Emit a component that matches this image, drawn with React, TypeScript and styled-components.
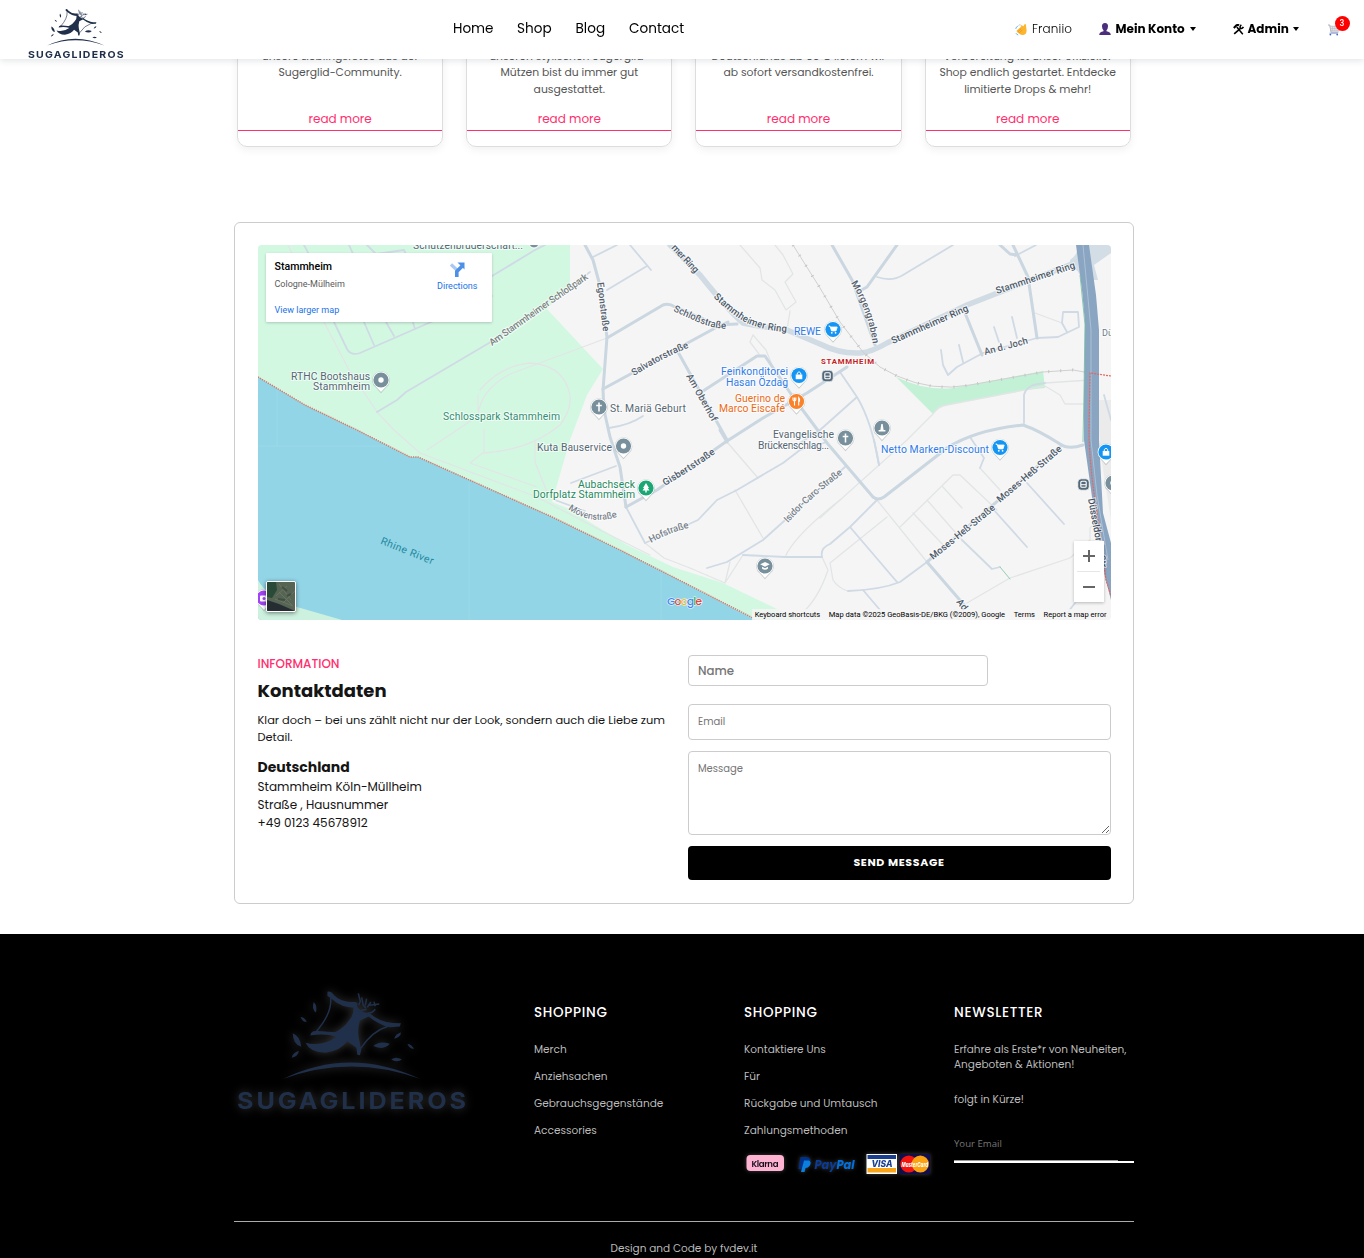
import React from "react";
import styled, { createGlobalStyle } from "styled-components";

const PINK = "#ff2f6e";
const NAVY = "#20304a";

const GlobalStyle = createGlobalStyle`
  *, *::before, *::after { box-sizing: border-box; }
  html, body { margin: 0; padding: 0; overflow: hidden; }
  body {
    background: #fff;
    color: #151515;
    font-family: Poppins, Inter, "Open Sans", sans-serif;
    font-size: 12px;
  }
  h2, h3, h4, p, ul { margin: 0; padding: 0; font-weight: inherit; list-style: none; }
  a { color: inherit; text-decoration: none; }
`;

/* ---------- header ---------- */

const Header = styled.header`
  position: fixed;
  inset: 0 0 auto 0;
  z-index: 10;
  height: 59px;
  display: flex;
  align-items: center;
  background: #fff;
  box-shadow: 0 2px 6px rgba(32, 48, 74, 0.12);
`;

const HeaderLogo = styled.div`
  width: 425px;
  height: 59px;
  padding: 8px 0 0 28px;
`;

const Nav = styled.nav`
  display: flex;
  flex: 1;
  padding-left: 28px;
  font-size: 13.6px;
  line-height: 20px;
  color: #000;
  margin-top: -1px;
`;

const NavLink = styled.a<{ $w: number }>`
  width: ${(p) => p.$w}px;
  white-space: nowrap;
`;

const Account = styled.div`
  display: flex;
  align-items: center;
  width: 349px;
  height: 20px;
  margin-top: -1px;
  color: #000;
`;

const AccountItem = styled.div<{ $w: number; $bold?: boolean; $gap?: number }>`
  display: flex;
  align-items: center;
  gap: ${(p) => p.$gap ?? 4}px;
  width: ${(p) => p.$w}px;
  font-size: 12px;
  font-weight: ${(p) => (p.$bold ? 700 : 300)};
  letter-spacing: ${(p) => (p.$bold ? 0 : 0.15)}px;
  white-space: nowrap;
`;

const Caret = styled.span`
  border: 3px solid transparent;
  border-top: 4px solid #000;
  border-bottom: 0;
  margin-left: 1px;
`;

const Cart = styled.div`
  position: relative;
  width: 24px;
  height: 20px;
  padding-top: 4px;
`;

const Badge = styled.span`
  position: absolute;
  left: 6.5px;
  top: -3px;
  width: 15px;
  height: 15px;
  border-radius: 50%;
  background: #f00;
  color: #fff;
  font-size: 8px;
  line-height: 15px;
  font-weight: 500;
  text-align: center;
`;

/* ---------- teaser cards ---------- */

const Cards = styled.section`
  display: grid;
  grid-template-columns: repeat(4, 206.3px);
  column-gap: 22.9px;
  margin-left: 237px;
`;

const Card = styled.article`
  display: flex;
  flex-direction: column;
  height: 147px;
  padding: 47px 0 16px;
  border: 1px solid #ddd;
  border-radius: 10px;
  box-shadow: 0 3px 8px rgba(0, 0, 0, 0.06);
  text-align: center;
`;

const CardText = styled.p`
  flex: none;
  height: 61px;
  font-size: 10.8px;
  line-height: 17px;
  color: #555;
  white-space: nowrap;
`;

const CardLine = styled.span`
  display: block;
  &:first-child { height: 16px; }
`;

const CardLink = styled.a`
  flex: none;
  height: 22px;
  border-bottom: 1px solid ${PINK};
  && { color: ${PINK}; }
  font-size: 12px;
  line-height: 20px;
`;

/* ---------- contact ---------- */

const Contact = styled.section`
  width: 900px;
  height: 682px;
  margin: 75px 0 30px 234px;
  padding: 22px 22px 0 23px;
  border: 1px solid #ccc;
  border-radius: 6px;
`;

const MapBox = styled.div`
  position: relative;
  width: 853px;
  height: 375px;
  border-radius: 4px;
  overflow: hidden;
  font-family: Roboto, sans-serif;
  > svg { display: block; }
`;

const PlaceCard = styled.div`
  position: absolute;
  left: 8px;
  top: 8px;
  width: 226px;
  height: 69px;
  display: flex;
  justify-content: space-between;
  padding: 6px 14.5px 0 8.5px;
  background: #fff;
  border-radius: 1px;
  box-shadow: 0 1px 3px rgba(0, 0, 0, 0.2);
`;

const PlaceName = styled.div`
  font-size: 10.6px;
  font-weight: 500;
  line-height: 15px;
  color: #000;
`;

const PlaceRegion = styled.div`
  margin-top: 4px;
  font-size: 9px;
  line-height: 12px;
  color: #5b5b5b;
`;

const BlueLink = styled.a<{ $mt: number }>`
  display: block;
  margin-top: ${(p) => p.$mt}px;
  font-size: 9px;
  line-height: 12px;
  && { color: #1a73e8; }
`;

const Directions = styled.div`
  display: flex;
  flex-direction: column;
  align-items: center;
  padding-top: 3px;
`;

const ZoomControl = styled.div`
  position: absolute;
  right: 7px;
  top: 296px;
  width: 30px;
  height: 61px;
  background: #fff;
  box-shadow: 0 1px 3px rgba(0, 0, 0, 0.25);
`;

const Satellite = styled.div`
  position: absolute;
  left: 8px;
  top: 336px;
  width: 30px;
  height: 31px;
  border: 1px solid #fff;
  border-radius: 2px;
  box-shadow: 0 1px 4px rgba(0, 0, 0, 0.5);
  overflow: hidden;
`;

const Attribution = styled.div`
  position: absolute;
  right: 0;
  bottom: 0;
  display: flex;
  gap: 8.6px;
  height: 11px;
  padding: 0 4.5px 0 3px;
  background: rgba(245, 245, 245, 0.85);
  font-size: 7.55px;
  line-height: 11px;
  color: #000;
  white-space: nowrap;
`;

const Columns = styled.div`
  display: grid;
  grid-template-columns: 430px 423px;
  padding-top: 35px;
`;

const Details = styled.div`
  display: flex;
  flex-direction: column;
  white-space: nowrap;
  margin-left: -0.5px;
`;

const Eyebrow = styled.div`
  color: ${PINK};
  font-size: 12px;
  font-weight: 500;
  line-height: 18px;
`;

const Title = styled.h2`
  font-size: 18px;
  font-weight: 700;
  line-height: 24px;
  margin-top: 6px;
`;

const Intro = styled.p`
  margin-top: 9px;
  font-size: 11.4px;
  line-height: 17px;
`;

const Country = styled.h3`
  margin-top: 10px;
  font-size: 14px;
  font-weight: 700;
  line-height: 22px;
`;

const AddressLine = styled.p`
  font-size: 12px;
  line-height: 18px;
`;

const Form = styled.form`
  display: flex;
  flex-direction: column;
  align-items: stretch;
`;

const Input = styled.input<{ $w: number; $h: number; $size: number; $mb: number; $weight?: number; $pt?: number }>`
  width: ${(p) => p.$w}px;
  height: ${(p) => p.$h}px;
  margin: 0 0 ${(p) => p.$mb}px;
  padding: ${(p) => p.$pt ?? 0}px 9px 0;
  border: 1px solid #ccc;
  border-radius: 4px;
  font-family: inherit;
  font-size: ${(p) => p.$size}px;
  font-weight: ${(p) => p.$weight ?? 400};
  outline: 0;
  &::placeholder { color: #757575; }
`;

const TextArea = styled.textarea`
  width: 423px;
  height: 84px;
  margin: 0 0 11px;
  padding: 9px;
  border: 1px solid #ccc;
  border-radius: 4px;
  font-family: inherit;
  font-size: 10px;
  line-height: 16px;
  resize: vertical;
  &::placeholder { color: #757575; }
`;

const Send = styled.button`
  height: 34px;
  padding: 0 1px 1px 0;
  border: 0;
  border-radius: 4px;
  background: #000;
  color: #fff;
  font-family: inherit;
  font-size: 11px;
  font-weight: 700;
  letter-spacing: 0.65px;
`;

/* ---------- footer ---------- */

const Footer = styled.footer`
  height: 324px;
  background: #000;
  color: #bbb;
`;

const FooterInner = styled.div`
  width: 900px;
  margin-left: 234px;
`;

const FooterGrid = styled.div`
  display: grid;
  grid-template-columns: 300px 210px 210px 180px;
  height: 288px;
  padding-top: 55px;
  border-bottom: 1px solid #aaa;
  white-space: nowrap;
`;

const FooterLogo = styled.div`
  padding-left: 3px;
  filter: drop-shadow(0 0 5px rgba(255, 255, 255, 0.22));
`;

const FooterCol = styled.div`
  padding-top: 13px;
`;

const FooterTitle = styled.h4`
  color: #fff;
  font-size: 13.5px;
  font-weight: 500;
  line-height: 22px;
  letter-spacing: 0.7px;
  margin-bottom: 12px;
`;

const FooterLink = styled.li`
  font-size: 10.55px;
  line-height: 27px;
`;

const FooterText = styled.p<{ $mt: number }>`
  margin-top: ${(p) => p.$mt}px;
  font-size: 10.5px;
  line-height: 15px;
`;

const Payments = styled.div`
  display: flex;
  margin-top: 7px;
  filter: drop-shadow(0 0 2px rgba(255, 255, 255, 0.25));
`;

const Subscribe = styled.div`
  width: 180px;
  margin-top: 28px;
  border-bottom: 2px solid #fff;
`;

const SubscribeInput = styled.input`
  display: block;
  width: 164px;
  height: 26px;
  padding: 0 0 8px;
  border: 0;
  border-bottom: 1px solid #999;
  background: transparent;
  font-family: "Open Sans", sans-serif;
  font-size: 9.6px;
  color: #fff;
  &::placeholder { color: #777; }
`;

const Credit = styled.div`
  padding-top: 18px;
  font-size: 10.5px;
  line-height: 18px;
  text-align: center;
`;

/* ---------- drawings ---------- */

const Leaf = ({ x, y, r, s = 1 }: { x: number; y: number; r: number; s?: number }) => (
  <path
    d="M-20 0Q-5-13 20-3Q6 13-20 0Z"
    transform={`translate(${x} ${y}) rotate(${r}) scale(${s})`}
  />
);

const Logo = ({ width }: { width: number }) => (
  <svg width={width} height={(width * 370) / 692} viewBox="52 55 692 370" fill={NAVY}>
    <path d="M404 96Q420 124 456 134Q440 142 422 150Q414 175 418 200L426 238L422 254L414 253L411 232L384 212Q364 240 318 247Q272 247 258 217Q310 230 352 198L344 187Q374 172 390 148Q404 132 402 112Z" />
    <path d="M324 63Q336 60 344 74Q364 93 392 94L410 94V112Q366 112 338 86Q332 80 324 76ZM273 195Q272 184 286 181H298L360 186L352 199Q320 190 290 193ZM446 124Q484 156 522 157L545 158L542 168L512 170Q480 164 446 136Z" />
    <path d="M334 82Q338 130 288 186M506 167Q458 182 424 234" fill="none" stroke={NAVY} strokeWidth="4.5" />
    <path d="M412 96Q408 122 430 128Q456 132 468 116M417 68L423 92L418 104M427 80L432 104L440 112M442 84L438 104M455 94L444 110M480 100L450 104M464 93L468 107M424 120L442 116" fill="none" stroke={NAVY} strokeWidth="4.5" />
    <path d="M190 326Q390 226 604 326Q395 250 190 326Z" />
    <Leaf x={285} y={110} r={82} s={0.8} />
    <Leaf x={252} y={147} r={42} s={0.6} />
    <Leaf x={231} y={209} r={62} s={1.2} />
    <Leaf x={228} y={252} r={-40} s={0.75} />
    <Leaf x={487} y={225} r={-3} s={1.25} />
    <Leaf x={536} y={196} r={-40} s={0.7} />
    <Leaf x={574} y={228} r={40} s={0.6} />
    <Leaf x={532} y={268} r={4} s={0.8} />
    <text x="52" y="417" textLength="698" lengthAdjust="spacingAndGlyphs" letterSpacing="8" fontFamily="Inter, sans-serif" fontWeight="700" fontSize="68">SUGAGLIDEROS</text>
  </svg>
);

const WaveIcon = () => (
  <svg width="13" height="13" viewBox="0 0 13 13">
    <path d="M1.8 7.6L6.4 3.6L5.3 3Q5.4 2 6.6 2.3L8.4 3.2L9.6 1.2Q11 .8 11 2.4L11.6 7.5Q11.5 11.5 8.2 12Q6 12.2 4.7 11L2.2 9.2Q1.2 8.4 1.8 7.6Z" fill="#fbb52e" />
    <path d="M3 8.6L6.2 5.6M4.3 9.9L7.4 6.8" stroke="#e48a1b" strokeWidth=".7" />
    <path d="M.8 5.8Q1 3.8 2.8 3.2M3.8 2.6L5 1.4M1 10.2Q1.6 11.6 3.2 12" stroke="#62a8d8" strokeWidth=".9" fill="none" />
  </svg>
);

const PersonIcon = () => (
  <svg width="12" height="12" viewBox="0 0 12 12" fill="#4c2f7c">
    <path d="M6 0Q9.2 0 9 3.5Q8.8 6.3 7.5 7.2V8.2Q11.6 8.8 11.8 12H.2Q.4 8.8 4.5 8.2V7.2Q3.2 6.3 3 3.5Q2.8 0 6 0Z" />
  </svg>
);

const ToolsIcon = () => (
  <svg width="11" height="11" viewBox="0 0 11 11" fill="none" stroke="#000">
    <path d="M.8 4L3.6 1.2Q5 .6 6 1.4" strokeWidth="2" />
    <path d="M3.8 3L9.8 10.2" strokeWidth="1.5" />
    <path d="M1.2 9.8L7.2 4.6" strokeWidth="1.7" />
    <path d="M8.3 .8Q6.4 2.6 7.4 4.2Q9.2 5 10.4 3" strokeWidth="1.5" />
  </svg>
);

const CartIcon = () => (
  <svg width="12" height="12" viewBox="0 0 12 12" fill="none">
    <path d="M0 1H1.8L3 8.2H10.4" stroke="#a3a6b2" strokeWidth=".9" />
    <path d="M2.1 2.2H11V7H3Z" fill="#e4e4e8" stroke="#b4b6bf" strokeWidth=".7" />
    <path d="M4.6 2V7M6.8 2V7M9 2V7M2.4 4.5H11" stroke="#b4b6bf" strokeWidth=".5" />
    <path d="M1.5 9.2H10" stroke="#7f97dd" strokeWidth=".9" />
    <circle cx="2.4" cy="10.6" r=".9" fill="#4666c2" />
    <circle cx="9.2" cy="10.6" r=".9" fill="#4666c2" />
  </svg>
);

const glyphs: Record<string, React.ReactNode> = {
  dot: <circle r="2.7" fill="#fff" />,
  cross: <path d="M0-4.5V4.5M-2.8-1.5H2.8" stroke="#fff" strokeWidth="1.5" />,
  tree: <path d="M0-5L3 0H1.8L3.5 2.5H.7V4.5H-.7V2.5H-3.5L-1.8 0H-3Z" fill="#fff" />,
  bag: <><path d="M-3.3-1H3.3V3.7H-3.3Z" fill="#fff" /><path d="M-1.7-1V-2.5Q0-5 1.7-2.5V-1" fill="none" stroke="#fff" /></>,
  cart: <><path d="M-4.4-3.5H-3L-1.5 1.4H3L4.2-2.5H-2.5" fill="#fff" stroke="#fff" strokeWidth=".8" /><circle cx="-1.2" cy="3.3" r=".9" fill="#fff" /><circle cx="2.6" cy="3.3" r=".9" fill="#fff" /></>,
  fork: <path d="M-2-4V4M-3.5-4V-1.5Q-2 .5-.7-1.5V-4M2.2 4V-4Q4 -2 2.2 1" fill="none" stroke="#fff" strokeWidth="1.1" />,
  column: <path d="M-3.4 3.5H3.4V2H1.6L.7-4H-.7L-1.6 2H-3.4Z" fill="#fff" />,
  school: <><path d="M-4.8-1.7L0-4L4.8-1.7L0 .7Z" fill="#fff" /><path d="M-3 .8V2.5Q0 5 3 2.5V.8L0 2.2Z" fill="#fff" /></>,
  camera: <><rect x="-4" y="-2.5" width="8" height="6" rx="1" fill="#fff" /><circle cy=".5" r="1.5" fill="#a142f4" /></>,
};

const Pin = ({ x, y, c = "#78909c", g }: { x: number; y: number; c?: string; g: string }) => (
  <g transform={`translate(${x} ${y})`}>
    <path d="M0 13.3L-5.4 7.3A8.9 8.9 0 1 1 5.4 7.3Z" fill="#8a969c" opacity=".45" />
    <path d="M0 12L-5.2 6.6A8.4 8.4 0 1 1 5.2 6.6Z" fill="#fff" />
    <circle r="7.6" fill={c} />
    {glyphs[g]}
  </g>
);

const Transit = ({ x, y }: { x: number; y: number }) => (
  <g transform={`translate(${x} ${y})`}>
    <rect x="-5.7" y="-5.7" width="11.4" height="11.4" rx="3.5" fill="#53697a" stroke="#fff" strokeWidth=".7" />
    <rect x="-2.7" y="-3.3" width="5.4" height="6" rx="1" fill="none" stroke="#fff" strokeWidth="1.1" />
    <path d="M-2.5 .2H2.5" stroke="#fff" />
  </g>
);

const mainRoads = [
  "M670 245L700 275Q728 310 743 323Q768 328 787 330L820 344Q840 354 860 353Q872 352 887 343L967 305L1077 262",
];
const midRoads = [
  "M585 245L593 260L599 282L607 337L603 390L604 410L610 437L620 467L626 507",
  "M607 338L663 305Q669 303 675 307L717 325L737 324",
  "M603 389L717 327L728 322",
  "M678 352L727 440M720 430L727 442",
  "M626 507L657 490L727 441L763 418L807 393L847 367",
  "M700 393L757 356L765 356L793 397L825 440L827 443L873 497Q878 501 884 497L947 448Q975 430 1023 425Q1038 430 1060 444Q1068 450 1083 445",
  "M832 245L852 280L875 345",
  "M897 245L867 287L858 292",
  "M1000 245L1010 254L1017 255M1013 245L1028 277L1037 338",
  "M963 308L982 355",
  "M927 562L965 606M927 562L1060 447",
];
const smallRoads = [
  "M593 257L617 245M607 290L647 266M630 245L651 270",
  "M626 507L645 543L687 525L698 520L717 500L737 490L783 463L800 450L827 442",
  "M707 568L727 562L763 540L783 522L845 467",
  "M848 591Q880 590 900 582L927 562",
  "M822 557Q820 548 830 544L850 527L877 500M850 527L897 582",
  "M840 372L857 397Q872 422 879 465M857 397L820 430L800 443",
  "M877 277Q892 282 903 275L953 245",
  "M941 350L943 365L948 375L957 367L983 353L1037 338L1058 337L1079 327L1078 312H1063L1062 323L1067 332M959 345L963 362M994 327L999 342M1012 317L1017 338",
  "M1024 423V395Q1025 389 1033 385L1045 383",
  "M743 555L785 557H822M863 590L880 610",
  "M1027 483L1064 524M960 475M992 508L1027 547M962 540L992 569L1000 567",
  "M571 483L616 466M609 428Q630 425 643 416M555 500L585 511",
  "M377 412L397 400L406 392L489 343L590 272",
  "M304 245L311 258M349 245L354 256M367 245L376 254L404 250L411 265M334 322L347 349Q351 356 360 353L431 322L492 296M364 322L374 345M386 322L394 336M410 313L415 329M492 276L535 250L545 245",
  "M970 437L984 458L980 468M874 440L879 465M1036 245L1015 256",
  "M1068 612L1075 603M1104 395L1111 420",
];
const paths = [
  "M288 245L324 322L349 370L377 412L394 430L420 453L537 497L600 530L650 555",
  "M427 450L478 416Q480 390 510 374L607 338M478 395V410M484 430V452L470 463L537 487M535 440V462L547 492",
  "M484 453Q530 450 560 425Q575 405 568 388Q560 365 530 363Q500 366 480 390",
  "M740 245L760 268L762 280L775 290L786 310L796 302L785 282L793 274L783 255L775 245M790 311L787 330M753 335L750 342L759 354M753 335L766 350L772 365",
  "M727 442L758 478M735 490L763 538",
  "M645 543L664 558L690 568L725 583L743 555M725 583L730 562",
  "M830 563L833 580Q838 588 848 591M887 517L830 563",
  "M820 518L907 440L933 414Q938 406 947 405L1045 386L1060 395L1065 404H1090",
  "M877 500L927 562M900 527L953 475H960L997 510M913 513L945 547M927 500L962 540M942 486L962 508M980 468L1000 490",
  "M967 603L1010 578L1070 558L1090 540V528L1098 520",
  "M785 557Q795 535 840 500M822 557L828 570Q818 600 800 615M1035 313L1062 323M1045 383L1090 380",
];

type LabelProps = { x: number; y: number; r?: number; w?: number; c?: string; s?: number; b?: number; a?: "start" | "middle" | "end"; halo?: number; children: React.ReactNode };
const Label = ({ x, y, r = 0, w, c = "#6c7a89", s = 10.4, b = 400, a = "start", halo = 0.65, children }: LabelProps) => (
  <text
    transform={`translate(${x} ${y}) rotate(${r})`}
    fill={c}
    fontSize={s}
    fontWeight={b}
    textAnchor={a}
    textLength={w}
    stroke="#fff"
    strokeWidth="2"
    strokeOpacity={halo}
    strokeLinejoin="round"
    paintOrder="stroke"
  >
    {children}
  </text>
);

const Curved = ({ id, d, w, c = "#56616e", s = 9.6, children }: { id: string; d: string; w?: number; c?: string; s?: number; children: string }) => (
  <>
    <path id={id} d={d} fill="none" />
    <text fill={c} fontSize={s} fontWeight="500" stroke="#fff" strokeWidth="2" strokeOpacity=".65" paintOrder="stroke" textLength={w}>
      <textPath href={`#${id}`}>{children}</textPath>
    </text>
  </>
);

const BLUE = "#2f7bea";
const SLATE = "#566774";

const StreetMap = () => (
  <svg width="853" height="375" viewBox="258 245 853 375" fontFamily="Roboto, sans-serif">
    <rect x="258" y="245" width="853" height="375" fill="#f5f5f5" />
    <path d="M258 245H570V285L547 309L603 369L587 395L570 440L552 502L567 508L627 545L673 567L723 583L800 620H258Z" fill="#d3f8e2" />
    <path d="M896 377Q925 391 953 388L1043 371L1045 388L1027 390L947 405Q940 406 933 414Z" fill="#c3f1d5" />
    <path d="M1098 400H1111V520L1100 450Z" fill="#ebebeb" />
    <path d="M1070 260Q1078 255 1078 245H1111V253L1094 265L1098 280H1082Q1078 268 1070 266Z" fill="#d3dde6" />
    <g fill="none" strokeLinejoin="round" strokeLinecap="round">
      {paths.map((d) => <path key={d} d={d} stroke="#e2e5e6" strokeWidth="1.3" />)}
      {smallRoads.map((d) => <path key={d} d={d} stroke="#cfdae5" strokeWidth="1.8" />)}
      {midRoads.map((d) => <path key={d} d={d} stroke="#cad6e0" strokeWidth="3" />)}
      {mainRoads.map((d) => <path key={d} d={d} stroke="#d0dbe4" strokeWidth="5.5" />)}
      <path d="M793 245L820 288L840 322L863 352L880 367L897 376Q933 392 970 385L1043 372L1073 370L1090 373" stroke="#d0d0d0" />
      <path d="M793 245L820 288L840 322L863 352L880 367L897 376Q933 392 970 385L1043 372L1073 370L1090 373" stroke="#c4c4c4" strokeWidth="3" strokeDasharray="1 11" strokeLinecap="butt" />
      <path d="M1000 567L1010 579" stroke="#94cdb2" />
    </g>
    <path d="M1076 245L1082 290L1085 323L1084 390L1084 440L1092 497L1105 577L1111 600V543L1103 513L1099 440L1099 330L1096 295L1089 245Z" fill="#8aa5c1" />
    <path d="M1083 245L1091 330L1091 440L1097 495L1108 560" fill="none" stroke="#abc0d5" />
    <path d="M1080 275L1085 325L1084 390L1083 442" fill="none" stroke="#74bfa0" strokeWidth=".8" />
    <path d="M1111 376L1090 373L1089 430Q1089 465 1098 520L1106 580L1111 596" fill="none" stroke="#e26763" strokeWidth="1.2" strokeDasharray="2 1" />
    <path d="M258 377L305 405L357 430L410 457H418L550 516L620 550L683 582L756 620H258Z" fill="#91d5e6" />
    <path d="M258 580Q266 596 297 607L342 620H258Z" fill="#cdf1df" />
    <path d="M258 446H390M277 388V446M469 482V620M661 570V620" stroke="#a2dbe9" strokeWidth=".7" />
    <path d="M258 377L305 405L357 430L410 457H418L550 516L620 550L683 582L753 618" fill="none" stroke="#dc7669" strokeWidth="1.5" strokeDasharray="1.3 1" />

    <Label x={413} y={248.5} w={110} c={SLATE}>Schützenbruderschaft...</Label>
    <circle cx="534" cy="243" r="5" fill="#78909c" stroke="#fff" />
    <Label x={370} y={380} a="end" w={79} c={SLATE}>RTHC Bootshaus</Label>
    <Label x={370} y={390} a="end" w={57} c={SLATE}>Stammheim</Label>
    <Label x={443} y={419.5} w={117} c="#358c73">Schlosspark Stammheim</Label>
    <Label x={610} y={412} w={76} c={SLATE}>St. Mariä Geburt</Label>
    <Label x={537} y={451} w={75} c={SLATE}>Kuta Bauservice</Label>
    <Label x={635} y={488} a="end" w={57} c="#1f8a5d">Aubachseck</Label>
    <Label x={635} y={498} a="end" w={102} c="#1f8a5d">Dorfplatz Stammheim</Label>
    <Label x={788} y={375} a="end" w={67} c={BLUE}>Feinkonditorei</Label>
    <Label x={788} y={385.5} a="end" w={62} c={BLUE}>Hasan Özdağ</Label>
    <Label x={785} y={401.5} a="end" w={50} c="#ee6a14">Guerino de</Label>
    <Label x={785} y={412} a="end" w={66} c="#ee6a14">Marco Eiscafé</Label>
    <Label x={794} y={335} w={27} c={BLUE}>REWE</Label>
    <Label x={834} y={438} a="end" w={61} c={SLATE}>Evangelische</Label>
    <Label x={829} y={448.5} a="end" w={71} c={SLATE}>Brückenschlag...</Label>
    <Label x={881} y={452.5} w={108} c={BLUE}>Netto Marken-Discount</Label>
    <Label x={821} y={363.5} w={53} c="#c5221f" s={7.8} b={700}>STAMMHEIM</Label>
    <Label x={380} y={543.5} r={22} w={56} c="#2288a0" halo={0}>Rhine River</Label>
    <Label x={1102} y={336} s={9}>Dü</Label>

    <Curved id="schlosspark" d="M492 346L550 305L592 276" w={118} c="#78837f">Am Stammheimer Schloßpark</Curved>
    <Curved id="egon" d="M597 283Q600 305 603 332" w={49}>Egonstraße</Curved>
    <Curved id="ring1" d="M671 248L698 277" w={35} c="#4c5968">mer Ring</Curved>
    <Curved id="ring2" d="M713 297Q740 322 752 325Q768 331 787 332" w={84} c="#4c5968">Stammheimer Ring</Curved>
    <Curved id="schloss" d="M673 311L700 323Q715 329 729 329" w={56}>Schloßstraße</Curved>
    <Curved id="salvator" d="M634 376Q660 359 690 347" w={62}>Salvatorstraße</Curved>
    <Curved id="oberhof" d="M686 376L712 422" w={53}>Am Oberhof</Curved>
    <Curved id="morgen" d="M851 283Q868 310 873 344" w={65}>Morgengraben</Curved>
    <Curved id="ring3" d="M893 344L970 310" w={83} c="#4c5968">Stammheimer Ring</Curved>
    <Curved id="ring4" d="M997 294L1078 267" w={83} c="#4c5968">Stammheimer Ring</Curved>
    <Curved id="joch" d="M985 355L1030 343" w={45}>An d. Joch</Curved>
    <Curved id="gisbert" d="M665 486Q692 470 716 453" w={60} c="#4c5968">Gisbertstraße</Curved>
    <Curved id="moeven" d="M568 509Q592 527 622 515" w={52} s={9.2} c="#79828b">Mövenstraße</Curved>
    <Curved id="hof" d="M651 543Q670 532 689 528" w={41} c="#79828b">Hofstraße</Curved>
    <Curved id="isidor" d="M788 523Q812 496 844 473" w={74} c="#79828b">Isidor-Caro-Straße</Curved>
    <Curved id="moses1" d="M933 560L998 507" w={81} c="#4c5968">Moses-Heß-Straße</Curved>
    <Curved id="moses2" d="M1000 503L1066 447" w={82} c="#4c5968">Moses-Heß-Straße</Curved>
    <Curved id="duessel" d="M1088 499L1100 565L1106 600" c="#3d4d60">Düsseldorfer Str.</Curved>
    <Curved id="ad" d="M956 602L970 620" c="#4c5968">Ad</Curved>

    <Pin x={381} y={380} g="dot" />
    <Pin x={599} y={407} g="cross" />
    <Pin x={623.5} y={446} g="dot" />
    <Pin x={646} y={488} c="#1ba675" g="tree" />
    <Pin x={799} y={375.5} c="#1495f4" g="bag" />
    <Pin x={796.5} y={401.5} c="#f9822b" g="fork" />
    <Pin x={833} y={329.5} c="#1495f4" g="cart" />
    <Pin x={882} y={428} g="column" />
    <Pin x={845.5} y={438} g="cross" />
    <Pin x={1000} y={447.5} c="#1495f4" g="cart" />
    <Pin x={1106} y={452} c="#1495f4" g="bag" />
    <Pin x={1113} y={483} g="dot" />
    <Pin x={765} y={566} g="school" />
    <Pin x={264} y={598} c="#a142f4" g="camera" />
    <Transit x={827.5} y={376} />
    <Transit x={1083.5} y={484.5} />

    <text x="667" y="604.5" fontFamily="Poppins, Lato, sans-serif" fontSize="11" fontWeight="500" textLength="35" stroke="#fff" strokeWidth="1.2" strokeOpacity=".8" paintOrder="stroke">
      <tspan fill="#4285f4">G</tspan><tspan fill="#ea4335">o</tspan><tspan fill="#fbbc04">o</tspan><tspan fill="#4285f4">g</tspan><tspan fill="#34a853">l</tspan><tspan fill="#ea4335">e</tspan>
    </text>
  </svg>
);

const cards = [
  ["unsere Lieblingsfotos aus der", "Sugerglid-Community."],
  ["unseren stylischen Sugerglid-", "Mützen bist du immer gut", "ausgestattet."],
  ["Deutschlands ab 50 € liefern wir", "ab sofort versandkostenfrei."],
  ["Vorbereitung ist unser offizieller", "Shop endlich gestartet. Entdecke", "limitierte Drops & mehr!"],
];

export default function App() {
  return (
    <>
      <GlobalStyle />
      <Header>
        <HeaderLogo><Logo width={96} /></HeaderLogo>
        <Nav>
          <NavLink $w={64}>Home</NavLink>
          <NavLink $w={58.5}>Shop</NavLink>
          <NavLink $w={53.5}>Blog</NavLink>
          <NavLink $w={60}>Contact</NavLink>
        </Nav>
        <Account>
          <AccountItem $w={84}><WaveIcon />Franiio</AccountItem>
          <AccountItem $w={134} $bold $gap={4.5}><PersonIcon />Mein Konto <Caret /></AccountItem>
          <AccountItem $w={95} $bold $gap={3.5}><ToolsIcon />Admin <Caret /></AccountItem>
          <Cart><CartIcon /><Badge>3</Badge></Cart>
        </Account>
      </Header>

      <Cards>
        {cards.map((lines) => (
          <Card key={lines[0]}>
            <CardText>{lines.map((l) => <CardLine key={l}>{l}</CardLine>)}</CardText>
            <CardLink href="#">read more</CardLink>
          </Card>
        ))}
      </Cards>

      <Contact>
        <MapBox>
          <StreetMap />
          <PlaceCard>
            <div>
              <PlaceName>Stammheim</PlaceName>
              <PlaceRegion>Cologne-Mülheim</PlaceRegion>
              <BlueLink href="#" $mt={14}>View larger map</BlueLink>
            </div>
            <Directions>
              <svg width="15" height="15" viewBox="0 0 15 15" fill="none">
                <path d="M1 2.5L7 8" stroke="#a9c8f4" strokeWidth="3.2" />
                <path d="M6.8 15V9.5L12 4.3" stroke="#4d90e8" strokeWidth="3.6" />
                <path d="M7.5 .5H14.5V7.5Z" fill="#4d90e8" />
              </svg>
              <BlueLink href="#" $mt={3}>Directions</BlueLink>
            </Directions>
          </PlaceCard>
          <Satellite>
            <svg width="28" height="29" viewBox="0 0 28 29">
              <rect width="28" height="29" fill="#566454" />
              <path d="M0 0H9L10 8L5 16L0 15Z" fill="#284a36" />
              <path d="M12 2L24 18M9 14L20 4M16 21L28 9M12 10L25 23M8 17L26 24" stroke="#6f7767" strokeWidth=".8" />
              <path d="M15 5L20 9M20 14L24 12M11 17L18 18" stroke="#3e5041" strokeWidth="2" />
              <path d="M0 18L12 22L28 29H0Z" fill="#252d33" />
            </svg>
          </Satellite>
          <ZoomControl>
            <svg width="30" height="61" viewBox="0 0 30 61" stroke="#666" strokeWidth="2">
              <path d="M9 15H21M15 9V21M9 46H21" />
              <path d="M3 30.5H26" stroke="#e6e6e6" strokeWidth="1" />
            </svg>
          </ZoomControl>
          <Attribution>
            <span>Keyboard shortcuts</span>
            <span>Map data ©2025 GeoBasis-DE/BKG (©2009), Google</span>
            <span>Terms</span>
            <span>Report a map error</span>
          </Attribution>
        </MapBox>
        <Columns>
          <Details>
            <Eyebrow>INFORMATION</Eyebrow>
            <Title>Kontaktdaten</Title>
            <Intro>Klar doch – bei uns zählt nicht nur der Look, sondern auch die Liebe zum<br />Detail.</Intro>
            <Country>Deutschland</Country>
            <AddressLine>Stammheim Köln-Müllheim</AddressLine>
            <AddressLine>Straße , Hausnummer</AddressLine>
            <AddressLine>+49 0123 45678912</AddressLine>
          </Details>
          <Form>
            <Input $w={300} $h={31} $size={11.8} $mb={18} $weight={500} $pt={2} placeholder="Name" />
            <Input $w={423} $h={36} $size={10} $mb={11} placeholder="Email" />
            <TextArea placeholder="Message" />
            <Send type="button">SEND MESSAGE</Send>
          </Form>
        </Columns>
      </Contact>

      <Footer>
        <FooterInner>
          <FooterGrid>
            <FooterLogo><Logo width={230} /></FooterLogo>
            <FooterCol>
              <FooterTitle>SHOPPING</FooterTitle>
              <ul>
                <FooterLink>Merch</FooterLink>
                <FooterLink>Anziehsachen</FooterLink>
                <FooterLink>Gebrauchsgegenstände</FooterLink>
                <FooterLink>Accessories</FooterLink>
              </ul>
            </FooterCol>
            <FooterCol>
              <FooterTitle>SHOPPING</FooterTitle>
              <ul>
                <FooterLink>Kontaktiere Uns</FooterLink>
                <FooterLink>Für</FooterLink>
                <FooterLink>Rückgabe und Umtausch</FooterLink>
                <FooterLink>Zahlungsmethoden</FooterLink>
              </ul>
              <Payments>
                <svg width="190" height="26" viewBox="744 1152 190 26">
                  <rect x="746.5" y="1156" width="37.5" height="16" rx="4" fill="#ffb3d2" />
                  <text x="751.5" y="1167.5" fontFamily="Poppins, Inter, sans-serif" fontSize="8.6" fontWeight="600" textLength="27" fill="#17101f">Klarna</text>
                  <path d="M800.5 1158H806.5Q812 1159 810 1164Q808.5 1168 803.5 1167L802.5 1170H798.5Z" fill="#003087" />
                  <path d="M804 1161.5H809Q812 1163 809.5 1167Q808 1169 805.5 1169L804.5 1173H801Z" fill="#0b7fe0" />
                  <text x="814.5" y="1170" fontFamily="Poppins, Inter, sans-serif" fontSize="11.5" fontWeight="700" fontStyle="italic" textLength="40" lengthAdjust="spacingAndGlyphs" fill="#0a3b96">Pay<tspan fill="#0070e0">Pal</tspan></text>
                  <rect x="866.5" y="1155" width="30.5" height="20" fill="#fff" />
                  <rect x="867.5" y="1156" width="28.5" height="4" fill="#1b3f8f" />
                  <rect x="867.5" y="1169" width="28.5" height="4.5" fill="#f9a51a" />
                  <text x="871.5" y="1168" fontFamily="Inter, sans-serif" fontSize="9.5" fontWeight="800" fontStyle="italic" textLength="21" lengthAdjust="spacingAndGlyphs" fill="#1b3f8f">VISA</text>
                  <rect x="899.5" y="1155" width="30.5" height="20" fill="#100f4c" />
                  <circle cx="908.8" cy="1165" r="8.6" fill="#f5150f" />
                  <circle cx="920.3" cy="1165" r="8.6" fill="#fca311" />
                  <text x="901.5" y="1167.5" fontFamily="Inter, sans-serif" fontSize="6.2" fontWeight="800" fontStyle="italic" textLength="26.5" lengthAdjust="spacingAndGlyphs" fill="#fff">MasterCard</text>
                </svg>
              </Payments>
            </FooterCol>
            <FooterCol>
              <FooterTitle>NEWSLETTER</FooterTitle>
              <FooterText $mt={18}>Erfahre als Erste*r von Neuheiten,<br />Angeboten &amp; Aktionen!</FooterText>
              <FooterText $mt={20}>folgt in Kürze!</FooterText>
              <Subscribe><SubscribeInput placeholder="Your Email" /></Subscribe>
            </FooterCol>
          </FooterGrid>
          <Credit>Design and Code by fvdev.it</Credit>
        </FooterInner>
      </Footer>
    </>
  );
}
